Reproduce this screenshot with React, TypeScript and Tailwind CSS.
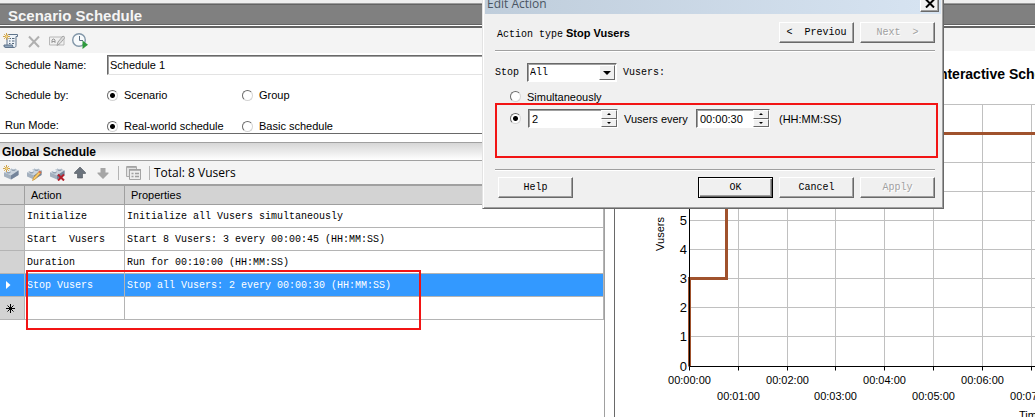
import { type ReactNode } from "react";
import clsx from "clsx";

const SCHEDULE_ROWS = [
  { action: "Initialize", properties: "Initialize all Vusers simultaneously" },
  {
    action: "Start  Vusers",
    properties: "Start 8 Vusers: 3 every 00:00:45 (HH:MM:SS)",
  },
  { action: "Duration", properties: "Run for 00:10:00 (HH:MM:SS)" },
  {
    action: "Stop Vusers",
    properties: "Stop all Vusers: 2 every 00:00:30 (HH:MM:SS)",
    selected: true,
  },
];

const IconButton = ({
  label,
  children,
}: {
  label: string;
  children: ReactNode;
}) => (
  <button type="button" aria-label={label} className="h-4 w-4 shrink-0">
    <svg viewBox="0 0 16 16" className="h-4 w-4">
      {children}
    </svg>
  </button>
);

const Spark = () => (
  <g>
    <path
      d="M3.500 0v7M0 3.500h7M1.200 1.200l4.600 4.600M5.800 1.200L1.200 5.800"
      stroke="#cfa24a"
    />
    <circle cx="3.500" cy="3.500" r="1.200" fill="#f6dc8c" />
  </g>
);

const Brick = () => (
  <g>
    <path d="M1 7.500L10 3l5.500 2.500v4.500L8 14.500l-7-3z" fill="#a3b0be" />
    <path d="M1 7.500L10 3l5.500 2.500L8 10.500z" fill="#cbd4dd" />
    <path d="M8 10.500l7.500-5V10L8 14.500z" fill="#74849a" />
    <path d="M3.500 6v1.500c0 1.300 4 1.300 4 0V6z" fill="#93a1b1" />
    <ellipse cx="5.500" cy="6" rx="2" ry="1.100" fill="#eef2f6" />
    <path d="M8.500 3.500V5c0 1.300 4 1.300 4 0V3.500z" fill="#93a1b1" />
    <ellipse cx="10.500" cy="3.500" rx="2" ry="1.100" fill="#eef2f6" />
  </g>
);

const ToolSeparator = () => <div className="h-[14px] w-px bg-[#b4b4b4]" />;

const RadioOption = ({
  name,
  label,
  checked,
  className,
}: {
  name: string;
  label: string;
  checked?: boolean;
  className?: string;
}) => (
  <label className={clsx("flex items-center gap-[6px]", className)}>
    <input
      type="radio"
      name={name}
      defaultChecked={checked}
      className="h-[11px] w-[11px] shrink-0 appearance-none rounded-full border border-t-[#6b6b6b] border-r-[#d4d4d4] border-b-[#d4d4d4] border-l-[#6b6b6b] bg-white checked:bg-[radial-gradient(circle,#000_2px,#fff_3px)]"
    />
    {label}
  </label>
);

const DialogButton = ({
  children,
  disabled,
  primary,
}: {
  children: ReactNode;
  disabled?: boolean;
  primary?: boolean;
}) => (
  <button
    type="button"
    disabled={disabled}
    className={clsx(
      "h-[21px] w-[75px] shrink-0 border bg-[#f0f0f0] font-['Liberation_Mono',monospace] text-[10px] leading-none whitespace-pre",
      primary
        ? "border-black shadow-[inset_1px_1px_#fff,inset_-1px_-1px_#696969,inset_-2px_-2px_#a0a0a0]"
        : "border-t-white border-r-[#696969] border-b-[#696969] border-l-white shadow-[inset_-1px_-1px_#a0a0a0]",
      disabled && "text-[#a0a0a0] [text-shadow:1px_1px_#fff]",
    )}
  >
    {children}
  </button>
);

const Spinner = ({
  label,
  value,
  className,
}: {
  label: string;
  value: string;
  className: string;
}) => (
  <div
    className={clsx(
      "flex h-[19px] border border-t-[#696969] border-r-white border-b-white border-l-[#696969] bg-white shadow-[inset_1px_1px_#a0a0a0]",
      className,
    )}
  >
    <input
      aria-label={label}
      defaultValue={value}
      className="min-w-0 flex-1 bg-transparent pl-[3px] text-[11px] outline-none"
    />
    <div className="flex w-4 shrink-0 flex-col">
      {["M2 3l2-2 2 2z", "M2 1l2 2 2-2z"].map((d, index) => (
        <button
          key={d}
          type="button"
          aria-label={index === 0 ? "Increase" : "Decrease"}
          className="flex flex-1 items-center justify-center border border-t-white border-r-[#696969] border-b-[#696969] border-l-white bg-[#f0f0f0]"
        >
          <svg viewBox="0 0 8 4" className="h-1 w-2">
            <path d={d} fill="#000" />
          </svg>
        </button>
      ))}
    </div>
  </div>
);

const ScheduleToolbar = () => (
  <div className="flex h-[25px] items-center gap-[7px] bg-[#f4f4f4] pl-[3px]">
    <IconButton label="New schedule">
      <path
        d="M5 1.500h9.500v2H13v9c0 1.500-1 2-2 2H2.500c-1 0-1.500-1-1.500-2h3V3z"
        fill="#eef3f8"
        stroke="#60758c"
      />
      <path
        d="M1 12h8.500c0 1.500.5 2.500 1.500 2.500H3c-1 0-2-1-2-2.500z"
        fill="#8fa5bc"
        stroke="#60758c"
      />
      <path
        d="M6.500 5.500H8M9 5.500h2.500M6 8h1.500M9 8h2.500M6 10.500h1.500M9 10.500h2"
        stroke="#53677c"
      />
      <Spark />
    </IconButton>
    <IconButton label="Delete schedule">
      <path
        d="M3 3.500l10 10.500M13 3.500L3 14"
        stroke="#b0b0b0"
        strokeWidth="2"
      />
    </IconButton>
    <IconButton label="Rename schedule">
      <path d="M.5 4h14.500v8H.5z" fill="#f0f0f0" stroke="#b8b8b8" />
      <path d="M3 10V7l1-1h1l1 1v3M3 8.500h3" fill="none" stroke="#999" />
      <path
        d="M8 12.500l1-3.500 5-6 2 1.500-5 6z"
        fill="#dedede"
        stroke="#a5a5a5"
      />
    </IconButton>
    <IconButton label="Start time">
      <circle
        cx="7"
        cy="7"
        r="6.300"
        fill="#f7fafc"
        stroke="#8296a8"
        strokeWidth="1.400"
      />
      <path d="M7.500 3v4.500H11" fill="none" stroke="#5b6f82" />
      <path d="M10.500 7.500V16l5.500-4.200z" fill="#2e9a3c" />
    </IconButton>
  </div>
);

const ScheduleForm = () => (
  <form className="flex h-20 flex-col gap-[6px] overflow-hidden pl-[5px]">
    <div className="flex h-6 shrink-0 items-center">
      <label htmlFor="schedule-name" className="w-[102px] shrink-0">
        Schedule Name:
      </label>
      <input
        id="schedule-name"
        defaultValue="Schedule 1"
        className="h-5 min-w-0 flex-1 border border-t-[#696969] border-r-[#e3e3e3] border-b-[#e3e3e3] border-l-[#696969] bg-white pl-[2px] shadow-[inset_1px_1px_#a0a0a0] outline-none"
      />
    </div>
    <div className="flex h-6 shrink-0 items-center">
      <span className="w-[102px] shrink-0">Schedule by:</span>
      <RadioOption name="by" label="Scenario" checked className="w-[135px]" />
      <RadioOption name="by" label="Group" />
    </div>
    <div className="flex h-6 shrink-0 items-center">
      <span className="w-[102px] shrink-0">Run Mode:</span>
      <RadioOption
        name="mode"
        label="Real-world schedule"
        checked
        className="w-[135px] pt-[2px]"
      />
      <RadioOption name="mode" label="Basic schedule" className="pt-[2px]" />
    </div>
  </form>
);

const ActionsToolbar = () => (
  <div className="flex h-[23px] items-center gap-[7px] bg-[#f4f4f4] pl-[3px]">
    <IconButton label="Add action">
      <Brick />
      <Spark />
    </IconButton>
    <IconButton label="Edit action">
      <Brick />
      <path
        d="M6.500 15.500l1-3L13.500 6l1.700 1.500L9.500 14z"
        fill="#f7c766"
        stroke="#c08a2c"
        strokeWidth=".6"
      />
      <path d="M12.500 7l1-1.200 1.800 1.500-1 1.200z" fill="#d9695a" />
    </IconButton>
    <IconButton label="Delete action">
      <Brick />
      <path d="M9 9.500l6 6M15 9.500l-6 6" stroke="#b3202c" strokeWidth="2" />
    </IconButton>
    <IconButton label="Move up">
      <path
        d="M8 2l5.500 5.500v1h-3V13h-5V8.500h-3v-1z"
        fill="#6b737d"
        stroke="#4d545c"
        strokeWidth=".6"
      />
    </IconButton>
    <IconButton label="Move down">
      <path d="M8 14L2.500 8.500v-1h3V3h5v4.500h3v1z" fill="#a6a6a6" />
    </IconButton>
    <ToolSeparator />
    <IconButton label="Copy">
      <path d="M.5 1.500h10v10H.5z" fill="#e3e3e3" stroke="#acacac" />
      <path d="M3.500 4.500h11v10h-11z" fill="#ededed" stroke="#a4a4a4" />
      <path
        d="M3 5h12M1 2h9M5.500 8.500h2M9 8.500h4M5.500 11.500h2M9 11.500h4"
        stroke="#a0a0a0"
        strokeWidth="1.500"
      />
    </IconButton>
    <ToolSeparator />
    <span className="-ml-[3px] font-['Open_Sans',sans-serif] text-[12px]">
      Total: 8 Vusers
    </span>
  </div>
);

const ActionsTable = () => (
  <table className="w-full table-fixed border-separate border-spacing-0 text-left [&_td]:border-r [&_td]:border-b [&_td]:border-[#b4b4b4] [&_td]:py-0 [&_th]:border-r [&_th]:border-b [&_th]:border-[#9f9f9f] [&_th]:py-0 [&_th]:font-normal">
    <thead>
      <tr className="h-[19px] bg-[#d3d3d3]">
        <th className="w-[25px]"></th>
        <th className="w-[100px] pl-[6px]">Action</th>
        <th className="pl-[6px]">Properties</th>
      </tr>
    </thead>
    <tbody className="font-['Liberation_Mono',monospace] text-[10px] leading-[14px] whitespace-pre">
      {SCHEDULE_ROWS.map((row) => (
        <tr
          key={row.action}
          className={clsx(
            "h-[23px]",
            row.selected ? "bg-[#3399ff] text-white" : "bg-white",
          )}
        >
          <td className={row.selected ? "bg-[#3399ff]" : "bg-[#d3d3d3]"}>
            {row.selected && (
              <svg viewBox="0 0 6 8" className="ml-[5px] h-2 w-[6px]">
                <path d="M1 0l4.500 4L1 8z" fill="#fff" />
              </svg>
            )}
          </td>
          <td className="pl-[2px]">
            <div className="pt-[2px]">{row.action}</div>
          </td>
          <td className="pl-[2px]">
            <div className="pt-[2px]">{row.properties}</div>
          </td>
        </tr>
      ))}
      <tr className="h-[23px] bg-white">
        <td className="bg-[#d3d3d3]">
          <svg viewBox="0 0 9 9" className="ml-[6px] h-[9px] w-[9px]">
            <path
              d="M4.500 0v9M0 4.500h9M1.500 1.500l6 6M7.500 1.500l-6 6"
              stroke="#000"
            />
          </svg>
        </td>
        <td></td>
        <td></td>
      </tr>
    </tbody>
  </table>
);

const ORIGIN_X = 74;
const ORIGIN_Y = 315;
const RIGHT = 1240;
const MINUTES = Array.from({ length: 24 }, (_, i) => i);
const VUSERS = Array.from({ length: 10 }, (_, i) => i);

const xOf = (minute: number) => ORIGIN_X + Math.round(minute * 48.8) + 0.5;
const yOf = (vusers: number) =>
  vusers === 0 ? ORIGIN_Y + 0.5 : ORIGIN_Y - 0.5 - vusers * 29;

const ScheduleGraph = () => (
  <svg
    width="1250"
    height="380"
    className="block shrink-0 font-['Liberation_Sans',sans-serif]"
  >
    <text x="320" y="28" fontSize="14" fontWeight="700">
      Interactive Schedule Graph
    </text>
    {VUSERS.map((v) => (
      <g key={v}>
        <path d={`M${ORIGIN_X} ${yOf(v)}H${RIGHT}`} stroke="#c0c0c0" />
        <text x="72" y={yOf(v) + 4} fontSize="13" textAnchor="end">
          {v}
        </text>
      </g>
    ))}
    {MINUTES.map((m) => (
      <g key={m}>
        <path d={`M${xOf(m)} ${yOf(9)}V${yOf(0)}`} stroke="#c0c0c0" />
        <path d={`M${xOf(m)} ${yOf(0)}v4`} stroke="#000" />
        <text
          x={xOf(m)}
          y={m % 2 === 0 ? 333 : 349}
          fontSize="11"
          textAnchor="middle"
        >
          {`00:${String(m).padStart(2, "0")}:00`}
        </text>
      </g>
    ))}
    <path
      d={`M74.500 ${yOf(0)}V${yOf(3)}H111.500V${yOf(6)}H148.500V${yOf(8)}H${RIGHT}`}
      fill="none"
      stroke="#a0522d"
      strokeWidth="3"
    />
    <path
      d={`M74.500 ${yOf(9)}V${yOf(0)}H${RIGHT}`}
      fill="none"
      stroke="#000"
    />
    <text
      fontSize="11"
      textAnchor="middle"
      transform="translate(49 183) rotate(-90)"
    >
      Vusers
    </text>
    <text x="404" y="368" fontSize="11">
      Time
    </text>
  </svg>
);

const EditActionDialog = () => (
  <div
    role="dialog"
    aria-label="Edit Action"
    className="absolute -top-[10px] left-[482px] w-[462px] border border-t-[#e3e3e3] border-r-[#696969] border-b-[#696969] border-l-[#e3e3e3] bg-[#f0f0f0] p-[2px] pb-[10px] shadow-[inset_1px_1px_#fff,inset_-1px_-1px_#a0a0a0]"
  >
    <div className="flex h-[21px] items-center justify-between bg-linear-to-r from-[#bfcddb] to-[#d7e4f2] pr-[2px] pl-[2px]">
      <span className="font-['Open_Sans',sans-serif] text-[12px] text-[#4a5563]">
        Edit Action
      </span>
      <button
        type="button"
        aria-label="Close"
        className="flex h-[17px] w-[19px] items-center justify-center border border-t-white border-r-[#696969] border-b-[#696969] border-l-white bg-[#f0f0f0] shadow-[inset_-1px_-1px_#a0a0a0]"
      >
        <svg viewBox="0 0 10 9" className="h-[9px] w-[10px]">
          <path d="M1 .5l8 8M9 .5l-8 8" stroke="#000" strokeWidth="2" />
        </svg>
      </button>
    </div>

    <div className="pt-2 pr-[6px] pl-[10px]">
      <div className="flex items-center gap-[6px] border-b border-[#a0a0a0] pb-[7px] shadow-[0_1px_#fff]">
        <div className="flex-1 pt-[2px] pl-[2px]">
          <span className="font-['Liberation_Mono',monospace] text-[10px]">
            Action type
          </span>
          <b className="pl-[3px]">Stop Vusers</b>
        </div>
        <DialogButton>{"<  Previou"}</DialogButton>
        <DialogButton disabled>{"Next  >"}</DialogButton>
      </div>

      <div className="mt-3 flex h-[19px] items-center font-['Liberation_Mono',monospace] text-[10px]">
        <label htmlFor="stop-count" className="w-8">
          Stop
        </label>
        <div className="relative">
          <select
            id="stop-count"
            className="block h-[19px] w-[90px] appearance-none border border-t-[#696969] border-r-white border-b-white border-l-[#696969] bg-white pl-[2px] shadow-[inset_1px_1px_#a0a0a0]"
          >
            <option>All</option>
          </select>
          <span className="pointer-events-none absolute top-[2px] right-[2px] flex h-[15px] w-4 items-center justify-center border border-t-white border-r-[#696969] border-b-[#696969] border-l-white bg-[#f0f0f0]">
            <svg viewBox="0 0 8 4" className="h-1 w-2">
              <path d="M0 0h8L4 4z" fill="#000" />
            </svg>
          </span>
        </div>
        <span className="pl-[6px]">Vusers:</span>
      </div>

      <div className="mt-2 flex h-[13px] items-center pl-[15px]">
        <RadioOption name="pace" label="Simultaneously" />
      </div>

      <div className="-mr-[3px] h-[55px] border-2 border-[#f21414] bg-[#f0f0f0] pt-1 pl-[13px]">
        <div className="flex h-[19px] items-center">
          <RadioOption name="pace" label="" checked />
          <Spinner label="Vusers" value="2" className="ml-[7px] w-[90px]" />
          <span className="w-[78px] pl-[6px]">Vusers every</span>
          <Spinner label="Interval" value="00:00:30" className="w-[74px]" />
          <span className="pl-[9px]">(HH:MM:SS)</span>
        </div>
      </div>

      <div className="mt-[11px] flex gap-[6px] border-t border-[#a0a0a0] pt-[7px] shadow-[inset_0_1px_#fff]">
        <div className="flex-1 pl-[3px]">
          <DialogButton>Help</DialogButton>
        </div>
        <DialogButton primary>OK</DialogButton>
        <DialogButton>Cancel</DialogButton>
        <DialogButton disabled>Apply</DialogButton>
      </div>
    </div>
  </div>
);

export default function App() {
  return (
    <div className="relative flex h-screen flex-col overflow-hidden bg-white font-['Liberation_Sans',Arial,sans-serif] text-[11px] leading-[14px] text-black">
      <header className="shrink-0 bg-white">
        <div className="h-[3px] bg-[#eeeeee]"></div>
        <div className="border-t border-[#9c9c9c]">
          <h1 className="flex h-[21px] items-center border-y border-[#636363] bg-[#808080] pt-[2px] pl-2 text-[15px] font-bold text-[#f5f5f5]">
            Scenario Schedule
          </h1>
        </div>
        <div className="mt-px h-[2px] bg-[#636363]"></div>
      </header>

      <main className="flex min-h-0 flex-1">
        <div className="flex min-w-0 flex-[615] border-r border-[#696969]">
          <section className="relative min-w-0 flex-1 border-r border-[#a0a0a0]">
            <ScheduleToolbar />
            <ScheduleForm />
            <div className="h-[9px] border-t border-[#696969]"></div>
            <h2 className="flex h-[19px] items-center border-y border-[#a0a0a0] bg-linear-to-b from-[#d6d6d6] to-white pl-[2px] text-[12px] font-bold">
              Global Schedule
            </h2>
            <ActionsToolbar />
            <div className="h-[2px] bg-[#a0a0a0]"></div>
            <ActionsTable />
            <div className="pointer-events-none absolute top-[242px] left-[26px] h-[60px] w-[395px] border-2 border-[#f21414]"></div>
          </section>
          <div className="w-[9px] shrink-0"></div>
        </div>
        <section className="min-w-0 flex-[420] overflow-hidden">
          <div className="h-[23px] bg-[#f4f4f4]"></div>
          <ScheduleGraph />
        </section>
      </main>

      <EditActionDialog />
    </div>
  );
}
